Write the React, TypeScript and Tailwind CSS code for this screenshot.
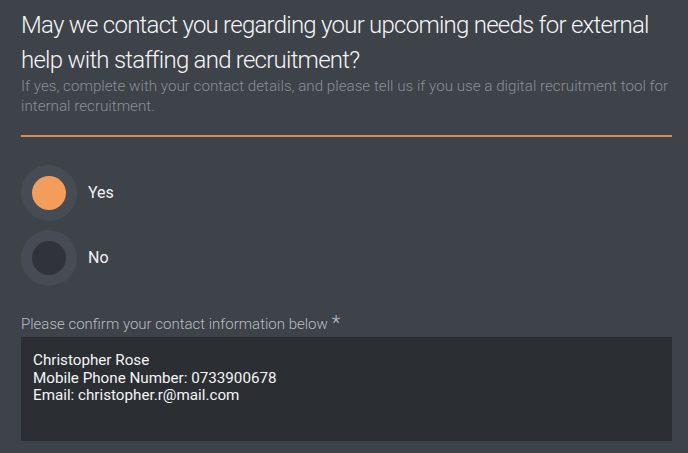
export default function App() {
  return (
    <div
      className="min-h-[453px] w-full bg-[#3e4249] pl-[21px] pr-[16px] pt-[8px] pb-4 text-white"
      style={{ fontFamily: 'Roboto, "Liberation Sans", sans-serif' }}
    >
      <h1 className="text-[24px] font-light leading-[35px] tracking-[-0.75px] text-[#f4f5f6]">
        May we contact you regarding your upcoming needs for external help with staffing and recruitment?
      </h1>
      <p className="-mt-[2px] text-[15.2px] font-light leading-[20px] text-[#8a8f97]">
        If yes, complete with your contact details, and please tell us if you use a digital recruitment tool for
        internal recruitment.
      </p>
      <div className="mt-[19px] h-[2px] w-full bg-[#d98c52]" />

      <div className="mt-[28px] flex flex-col gap-[9px]">
        <label className="flex items-center gap-[11px]">
          <span className="flex h-[56px] w-[56px] items-center justify-center rounded-full bg-[#474b53]">
            <span className="h-[34px] w-[34px] rounded-full bg-[#f29d5c]" />
          </span>
          <span className="text-[16px] text-[#f1f2f3]">Yes</span>
        </label>
        <label className="flex items-center gap-[11px]">
          <span className="flex h-[56px] w-[56px] items-center justify-center rounded-full bg-[#474b53]">
            <span className="h-[34px] w-[34px] rounded-full bg-[#30333a]" />
          </span>
          <span className="text-[16px] text-[#f1f2f3]">No</span>
        </label>
      </div>

      <div className="mt-[28px] flex items-start text-[15px] font-light leading-[20px] text-[#b9bdc3]">
        <span>Please confirm your contact information below</span>
        <span className="ml-[4px] text-[20px] leading-[18px]">*</span>
      </div>
      <div className="mt-[3px] h-[104px] w-full bg-[#2b2e33] px-[12px] pt-[15px] text-[15.2px] font-normal leading-[17.5px] text-[#f4f5f6]">
        <div>Christopher Rose</div>
        <div>Mobile Phone Number: 0733900678</div>
        <div>Email: christopher.r@mail.com</div>
      </div>
    </div>
  )
}
